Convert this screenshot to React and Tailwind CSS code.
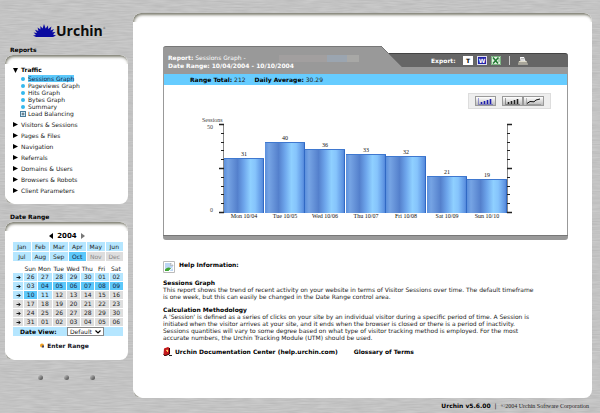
const reports = [
  'Visitors & Sessions',
  'Pages & Files',
  'Navigation',
  'Referrals',
  'Domains & Users',
  'Browsers & Robots',
  'Client Parameters',
];

const trafficReports = ['Sessions Graph', 'Pageviews Graph', 'Hits Graph', 'Bytes Graph', 'Summary'];

const months = [
  ['Jan', 'Feb', 'Mar', 'Apr', 'May', 'Jun'],
  ['Jul', 'Aug', 'Sep', 'Oct', 'Nov', 'Dec'],
];

const weekdays = ['Sun', 'Mon', 'Tue', 'Wed', 'Thu', 'Fri', 'Sat'];

const weeks = [
  ['26', '27', '28', '29', '30', '01', '02'],
  ['03', '04', '05', '06', '07', '08', '09'],
  ['10', '11', '12', '13', '14', '15', '16'],
  ['17', '18', '19', '20', '21', '22', '23'],
  ['24', '25', '26', '27', '28', '29', '30'],
  ['31', '01', '02', '03', '04', '05', '06'],
];

const sessions = [
  { day: 'Mon 10/04', value: 31 },
  { day: 'Tue 10/05', value: 40 },
  { day: 'Wed 10/06', value: 36 },
  { day: 'Thu 10/07', value: 33 },
  { day: 'Fri 10/08', value: 32 },
  { day: 'Sat 10/09', value: 21 },
  { day: 'Sun 10/10', value: 19 },
];

const available = 'bg-[#b5e6ff] text-[#222]';
const selected = 'bg-[#5cc8fa] text-[#124]';
const disabled = 'bg-[#dedede] text-[#222]';

function dayStyle(index) {
  if (index >= 8 && index <= 14) return selected;
  if (index <= 15) return available;
  return disabled;
}

function monthStyle(month) {
  if (month === 'Oct') return selected;
  if (month === 'Nov' || month === 'Dec') return 'bg-[#dedede] text-[#888]';
  return available;
}

function BrushedMetal() {
  return (
    <svg className="absolute inset-0 h-full w-full" aria-hidden="true">
      <filter id="brushed" x="0" y="0" width="100%" height="100%" colorInterpolationFilters="sRGB">
        <feTurbulence type="fractalNoise" baseFrequency="0.06 0.7" numOctaves="2" seed="4" />
        <feColorMatrix values="0.1 0 0 0 0.715  0.1 0 0 0 0.715  0.1 0 0 0 0.715  0 0 0 0 1" />
      </filter>
      <rect width="100%" height="100%" filter="url(#brushed)" />
    </svg>
  );
}

function Panel({ className = '', children }) {
  return (
    <div className={`relative overflow-hidden rounded-[8px] bg-white ${className}`}>
      <div className="pointer-events-none absolute inset-x-0 top-0 h-[9px] overflow-hidden">
        <div className="h-[24px] rounded-[8px] shadow-[inset_1px_2px_3px_#7d7d70]" />
      </div>
      <svg className="absolute bottom-0 left-0 h-[9px] w-[10px]" viewBox="0 0 10 9" aria-hidden="true">
        <defs>
          <radialGradient id="notch" cx="0" cy="1" r="1">
            <stop offset="0.3" stopColor="#8d8d84" />
            <stop offset="1" stopColor="#fff" />
          </radialGradient>
        </defs>
        <path d="M0 0Q1 7 10 9H0Z" fill="url(#notch)" />
      </svg>
      {children}
    </div>
  );
}

function Logo() {
  return (
    <a href="#home" className="flex items-center pl-[33px]" aria-label="Urchin">
      <svg className="h-[14px] w-[23px]" viewBox="0 0 23 14" aria-hidden="true">
        <path
          d="M3 13 0 11.6 3 11 .6 8.6 4 9 2 5.8 5.4 7 4.6 3.4 7.4 5.6 7.4 2 9.6 4.6 11 0 12.6 4.4 15 1.4 15.2 5 18.4 2.6 17.6 6.4 21 5 19.2 8.2 22.4 8 20 10.4 23 11.4 20 13Z"
          fill="#0b0ba0"
        />
      </svg>
      <span className="font-['Open_Sans',sans-serif] text-[14px] leading-[18px] font-bold text-[#0c0c0c]">Urchin</span>
      <span className="self-start text-[3px] leading-[12px] text-[#555]">®</span>
    </a>
  );
}

function ReportsNav() {
  return (
    <nav className="flex flex-col px-2 pt-[11px] pb-[8px]">
      <button className="flex h-[8px] items-center gap-[3px] text-left font-bold text-black">
        <svg className="h-[5px] w-[5px]" viewBox="0 0 5 5" aria-hidden="true">
          <path d="M0 0H5L2.500 5Z" />
        </svg>
        Traffic
      </button>
      <ul className="flex flex-col pt-[1px] pl-[8px]">
        {trafficReports.map((name, i) => (
          <li key={name} className="flex h-[7px] items-center gap-[3px]">
            <span className="h-[4px] w-[4px] rounded-full bg-[#35b8ee]" />
            <a href="#report" className={i === 0 ? 'bg-[#5cc8fa] leading-[7px] text-[#124]' : 'leading-[7px]'}>
              {name}
            </a>
          </li>
        ))}
        <li className="flex h-[7px] items-center gap-[2px]">
          <svg className="-ml-px h-[6px] w-[6px]" viewBox="0 0 6 6" aria-hidden="true">
            <rect x="0.500" y="0.500" width="5" height="5" fill="#d8f0fc" stroke="#4b7d9b" />
            <path d="M1.500 3H4.500M3 1.500V4.500" stroke="#234" strokeWidth="0.700" />
          </svg>
          <a href="#report">Load Balancing</a>
        </li>
      </ul>
      <ul className="flex flex-col pt-[2px]">
        {reports.map((name) => (
          <li key={name}>
            <button className="flex h-[11px] items-center gap-[3px]">
              <svg className="h-[5px] w-[5px]" viewBox="0 0 5 5" aria-hidden="true">
                <path d="M0 0L5 2.500L0 5Z" fill="#000" />
              </svg>
              {name}
            </button>
          </li>
        ))}
      </ul>
    </nav>
  );
}

function DateRange() {
  return (
    <div className="flex flex-col pt-[8px] pr-[5px] pb-[10px] pl-[8px]">
      <div className="flex h-[12px] items-center justify-center gap-[4px] pr-[2px]">
        <button aria-label="Previous year">
          <svg className="h-[6px] w-[4px]" viewBox="0 0 4 6" aria-hidden="true">
            <path d="M4 0V6L0 3Z" fill="#000" />
          </svg>
        </button>
        <span className="text-[7px] font-bold text-black">2004</span>
        <button aria-label="Next year">
          <svg className="h-[6px] w-[4px]" viewBox="0 0 4 6" aria-hidden="true">
            <path d="M0 0V6L4 3Z" fill="#777" />
          </svg>
        </button>
      </div>
      <div className="flex flex-col gap-px">
        {months.map((row) => (
          <div key={row[0]} className="flex gap-px">
            {row.map((m) => (
              <button key={m} className={`h-[9px] flex-1 text-center ${monthStyle(m)}`}>
                {m}
              </button>
            ))}
          </div>
        ))}
      </div>
      <table className="mt-[3px] w-full table-fixed border-separate border-spacing-0">
        <thead>
          <tr>
            <th className="w-[10px]" />
            {weekdays.map((d) => (
              <th key={d} className="h-[9px] p-0 text-center font-normal">
                {d}
              </th>
            ))}
          </tr>
        </thead>
        <tbody>
          {weeks.map((week, w) => (
            <tr key={w}>
              <td className="h-[9px] border-b border-white p-0">
                <button
                  aria-label="Select week"
                  className={`flex h-[8px] w-full items-center justify-center ${w < 3 ? available : disabled}`}
                >
                  <svg className="h-[5px] w-[5px]" viewBox="0 0 5 5" aria-hidden="true">
                    <path d="M0.500 2.500H4M2.500 0.800L4.200 2.500L2.500 4.200" fill="none" stroke="#000" strokeWidth="0.900" />
                  </svg>
                </button>
              </td>
              {week.map((d, i) => (
                <td key={i} className="h-[9px] border-b border-l border-white p-0">
                  <button className={`block h-[8px] w-full text-center leading-[8px] ${dayStyle(w * 7 + i)}`}>{d}</button>
                </td>
              ))}
            </tr>
          ))}
        </tbody>
      </table>
      <div className="flex h-[9px] items-center bg-[#b5e6ff] pl-[7px]">
        <label htmlFor="view" className="w-[47px] font-bold text-black">
          Date View:
        </label>
        <div className="relative flex">
          <select
            id="view"
            defaultValue="Default"
            className="h-[9px] w-[37px] appearance-none border border-[#888] bg-white pl-[2px] leading-[7px]"
          >
            <option>Default</option>
            <option>Daily</option>
            <option>Monthly</option>
          </select>
          <svg className="pointer-events-none absolute top-[3px] right-[3px] h-[4px] w-[6px]" viewBox="0 0 6 4" aria-hidden="true">
            <path d="M0.500 0.500L3 3L5.500 0.500" fill="none" stroke="#000" strokeWidth="1.200" />
          </svg>
        </div>
      </div>
      <button className="mt-[5px] flex h-[9px] items-center justify-center gap-[3px] pr-[7px] font-bold text-[#112]">
        <svg className="h-[5px] w-[4px]" viewBox="0 0 4 5" aria-hidden="true">
          <circle cx="2" cy="2.500" r="2" fill="#f0a020" />
          <path d="M2 2.500H4V4.500H2Z" fill="#446" />
        </svg>
        Enter Range
      </button>
    </div>
  );
}

function MiniBars({ color }) {
  return (
    <svg className="h-[7px] w-[15px]" viewBox="0 0 15 7" aria-hidden="true">
      <path d="M0.500 0V6.500H15" fill="none" stroke={color} strokeWidth="0.400" />
      <path d="M3.500 4V6M6.500 3V6M9.500 2V6M12.500 1V6" stroke={color} strokeWidth="1.600" />
    </svg>
  );
}

function ChartSwitcher() {
  const button = 'flex h-[10px] w-[21px] items-center justify-center border border-[#999] bg-linear-to-b from-white to-[#bbb]';
  return (
    <div className="mr-[16px] flex gap-[6px] self-end border border-[#ddd] bg-[#eee] px-[6px] py-[2px]">
      <button className={button} aria-label="Bar graph">
        <MiniBars color="#1c1cb0" />
      </button>
      <div className="flex">
        <button className={button} aria-label="Grouped bar graph">
          <MiniBars color="#222" />
        </button>
        <button className={button} aria-label="Line graph">
          <svg className="h-[7px] w-[15px]" viewBox="0 0 15 7" aria-hidden="true">
            <path d="M0.500 0V6.500H15" fill="none" stroke="#666" strokeWidth="0.400" />
            <path d="M1 5.500L4 3.500L8 3.800L10 2L14 1" fill="none" stroke="#111" strokeWidth="1" />
          </svg>
        </button>
      </div>
    </div>
  );
}

function Axis({ x, direction }) {
  return (
    <g stroke="#222">
      <path d={`M${x + 0.5} 9V98`} stroke="#888" />
      {Array.from({ length: 11 }, (_, i) => {
        const y = Math.round(9 + i * 8.8) + 0.5;
        const length = i % 5 === 0 ? 5 : 3;
        return <path key={i} d={`M${x + (direction > 0 ? 0 : 1)} ${y}h${direction * length}`} strokeWidth={i % 5 === 0 ? 1.4 : 1} />;
      })}
    </g>
  );
}

function SessionsChart() {
  return (
    <svg
      className="ml-9 h-[108px] w-[328px] font-['Liberation_Serif',serif]"
      viewBox="0 0 328 108"
      role="img"
      aria-label="Sessions per day"
    >
      <defs>
        <linearGradient id="bar">
          <stop offset="0" stopColor="#5b8fdc" />
          <stop offset="0.100" stopColor="#76a4e4" />
          <stop offset="0.340" stopColor="#5480cc" />
          <stop offset="0.500" stopColor="#6ea6ec" />
          <stop offset="0.660" stopColor="#8fd0ff" />
          <stop offset="0.780" stopColor="#86c4fc" />
          <stop offset="0.960" stopColor="#5b90e0" />
          <stop offset="1" stopColor="#1d58b8" />
        </linearGradient>
      </defs>
      <text x="2" y="7" fontSize="6" fill="#444">Sessions</text>
      <text x="7" y="14" fontSize="6" fill="#444">50</text>
      <text x="10" y="97" fontSize="6" fill="#444">0</text>
      <Axis x={23} direction={-1} />
      <Axis x={307} direction={1} />
      {sessions.map((s, i) => {
        const x = 24 + Math.round(i * 40.5);
        const height = Math.round(s.value * 1.78);
        return (
          <g key={s.day} textAnchor="middle" fontSize="6" fill="#111">
            <rect x={x} y={98 - height} width="40" height={height} fill="url(#bar)" />
            <rect x={x} y={98 - height} width="40" height="1" fill="#3f78cf" />
            <text x={x + 20} y={96 - height}>{s.value}</text>
            <text x={x + 20} y="103">{s.day}</text>
          </g>
        );
      })}
    </svg>
  );
}

function ExportBar() {
  return (
    <div className="flex flex-1 flex-col pt-[7px]">
      <div className="flex h-[14px] items-center rounded-tr-[3px] border-t border-[#444] bg-[#666] pl-[28px] text-white">
        <span className="w-[32px] font-bold">Export:</span>
        <div className="flex gap-[4px]">
          <button className="flex h-[9px] w-[10px] items-center justify-center bg-white font-bold text-black">T</button>
          <button className="flex h-[9px] w-[10px] items-center justify-center border border-[#dde] bg-[#2222a8] font-bold text-white">
            W
          </button>
          <button className="h-[9px] w-[10px]" aria-label="Excel">
            <svg className="h-[9px] w-[10px]" viewBox="0 0 10 9" aria-hidden="true">
              <rect width="10" height="9" fill="#e4f2e4" />
              <path d="M2 1.500L7 7.500M7.500 1.500L2 7.500" stroke="#237a33" strokeWidth="1.600" />
              <path d="M7 3H9M7 5H9M0.500 0.500H9.500V8.500H0.500Z" fill="none" stroke="#4d9a58" strokeWidth="0.700" />
            </svg>
          </button>
        </div>
        <span className="ml-[8px] h-[9px] w-px bg-[#ccc]" />
        <button className="ml-[8px]" aria-label="Print">
          <svg className="h-[8px] w-[10px]" viewBox="0 0 10 8" aria-hidden="true">
            <path d="M2 0H6L7.500 4H2.500Z" fill="#fff" />
            <path d="M3 1.500H6M3 3H6.500" stroke="#777" strokeWidth="0.500" />
            <path d="M1 4H8.500L10 7.500H0Z" fill="#e0dccb" />
            <path d="M0.500 6H9.500" stroke="#444" strokeWidth="0.700" />
          </svg>
        </button>
      </div>
      <div className="flex-1 bg-[#999]" />
    </div>
  );
}

function ReportCard() {
  return (
    <section className="flex flex-col">
      <header className="flex h-[28px]">
        <div className="flex w-[218px] flex-col rounded-tl-[3px] border-t border-[#777] bg-[#999] pt-[7px] pl-[5px] text-white">
          <div className="flex h-[8px] items-center gap-[3px]">
            <span>
              <b>Report:</b> Sessions Graph -
            </span>
            <span className="flex h-[7px] flex-1 pr-[22px]">
              <span className="w-[30px]" />
              <span className="flex-1 bg-[#a29f9f]" />
              <span className="w-[20px] bg-[#9ba5b0]" />
              <span className="w-[12px] bg-[#a8a8a6]" />
            </span>
          </div>
          <div className="flex h-[8px] items-center">
            <span>
              <b>Date Range:</b> <span className="font-bold">10/04/2004 - 10/10/2004</span>
            </span>
          </div>
        </div>
        <svg className="h-[28px] w-[22px]" viewBox="0 0 22 28" aria-hidden="true">
          <path d="M6 7H22V22H6Z" fill="#666" />
          <path d="M6 7.500H22" stroke="#444" />
          <path d="M0 0L21 21H22V28H0Z" fill="#999" />
          <path d="M0 0L21 21" stroke="#777" />
        </svg>
        <ExportBar />
      </header>
      <div className="flex flex-col border-x border-[#999]">
        <div className="flex h-[11px] items-center gap-[9px] bg-[#66ccff] pl-[26px]">
          <span>
            <b className="text-black">Range Total:</b> 212
          </span>
          <span>
            <b className="text-black">Daily Average:</b> 30.29
          </span>
        </div>
        <div className="flex flex-col gap-[6px] pt-[8px] pb-[12px]">
          <ChartSwitcher />
          <SessionsChart />
        </div>
      </div>
      <div className="h-[5px] rounded-b-[3px] border-t border-[#777] bg-[#999]" />
    </section>
  );
}

function Help() {
  return (
    <section className="flex flex-col gap-[6px]">
      <div className="flex gap-[4px]">
        <svg className="h-[12px] w-[12px]" viewBox="0 0 12 12" aria-hidden="true">
          <path d="M0.500 0.500H11.500V11.500H0.500Z" fill="#fff" stroke="#bbb" />
          <path d="M2 2H7.500L10 4.500V10H2Z" fill="#bcd6f4" />
          <path d="M7.500 2V4.500H10Z" fill="#fff" stroke="#999" strokeWidth="0.500" />
          <path d="M2 10V8.500Q5 5 8 7.500L5.500 10Z" fill="#3fa535" />
          <path d="M5.500 10.500L10.500 6" stroke="#fff" />
        </svg>
        <h2 className="font-bold text-black">Help Information:</h2>
      </div>
      <div>
        <h3 className="leading-[7px] font-bold text-black">Sessions Graph</h3>
        <p className="leading-[7px]">
          This report shows the trend of recent activity on your website in terms of Visitor Sessions over time. The default timeframe
          <br />
          is one week, but this can easily be changed in the Date Range control area.
        </p>
      </div>
      <div>
        <h3 className="leading-[7px] font-bold text-black">Calculation Methodology</h3>
        <p className="leading-[7px]">
          A 'Session' is defined as a series of clicks on your site by an individual visitor during a specific period of time. A Session is
          <br />
          initiated when the visitor arrives at your site, and it ends when the browser is closed or there is a period of inactivity.
          <br />
          Sessions quantities will vary to some degree based on what type of visitor tracking method is employed. For the most
          <br />
          accurate numbers, the Urchin Tracking Module (UTM) should be used.
        </p>
      </div>
      <div className="flex items-center font-bold text-black">
        <svg className="mr-[3px] h-[9px] w-[9px]" viewBox="0 0 9 9" aria-hidden="true">
          <path d="M1 1.500L5 0L6.500 1V7L2 9L0.500 7.500Z" fill="#c3181b" />
          <path d="M0.500 7.500L2 8.800L6.500 7V1" fill="none" stroke="#300" />
          <path d="M6 8.500H9" stroke="#222" />
          <path d="M3 3.500L4.500 3V5" fill="none" stroke="#fc6" />
        </svg>
        <a href="#docs">Urchin Documentation Center (help.urchin.com)</a>
        <a href="#glossary" className="ml-[16px]">
          Glossary of Terms
        </a>
      </div>
    </section>
  );
}

function Screws() {
  return (
    <div className="flex justify-center gap-[21px] pt-[15px]">
      {[0, 1, 2].map((i) => (
        <span key={i} className="h-[5px] w-[5px] rounded-full bg-linear-to-br from-[#ccc] to-[#444]" />
      ))}
    </div>
  );
}

export default function App() {
  return (
    <div className="relative min-h-screen bg-[#c2c2c2] font-['DejaVu_Sans',sans-serif] text-[6px] leading-[8px] whitespace-nowrap text-[#222]">
      <BrushedMetal />
      <div className="relative flex min-h-screen">
        <aside className="flex w-[133px] flex-none flex-col px-[5px] pt-[22px]">
          <div className="-ml-[5px]">
            <Logo />
          </div>
          <h2 className="mt-[6px] mb-[1px] pl-[5px] font-bold text-black">Reports</h2>
          <Panel>
            <ReportsNav />
          </Panel>
          <h2 className="mt-[9px] mb-[1px] pl-[5px] font-bold text-black">Date Range</h2>
          <Panel>
            <DateRange />
          </Panel>
          <Screws />
        </aside>
        <div className="flex min-w-0 flex-1 flex-col pt-[13px] pr-[8px]">
          <Panel className="flex flex-1 flex-col gap-[21px] pt-[33px] pr-[24px] pl-[30px]">
            <ReportCard />
            <Help />
          </Panel>
          <footer className="flex h-[15px] items-center justify-end gap-[4px] pr-[3px]">
            <b className="text-black">Urchin v5.6.00</b>
            <span>|</span>
            <span className="font-['Liberation_Serif',serif]">©2004 Urchin Software Corporation</span>
          </footer>
        </div>
      </div>
    </div>
  );
}
